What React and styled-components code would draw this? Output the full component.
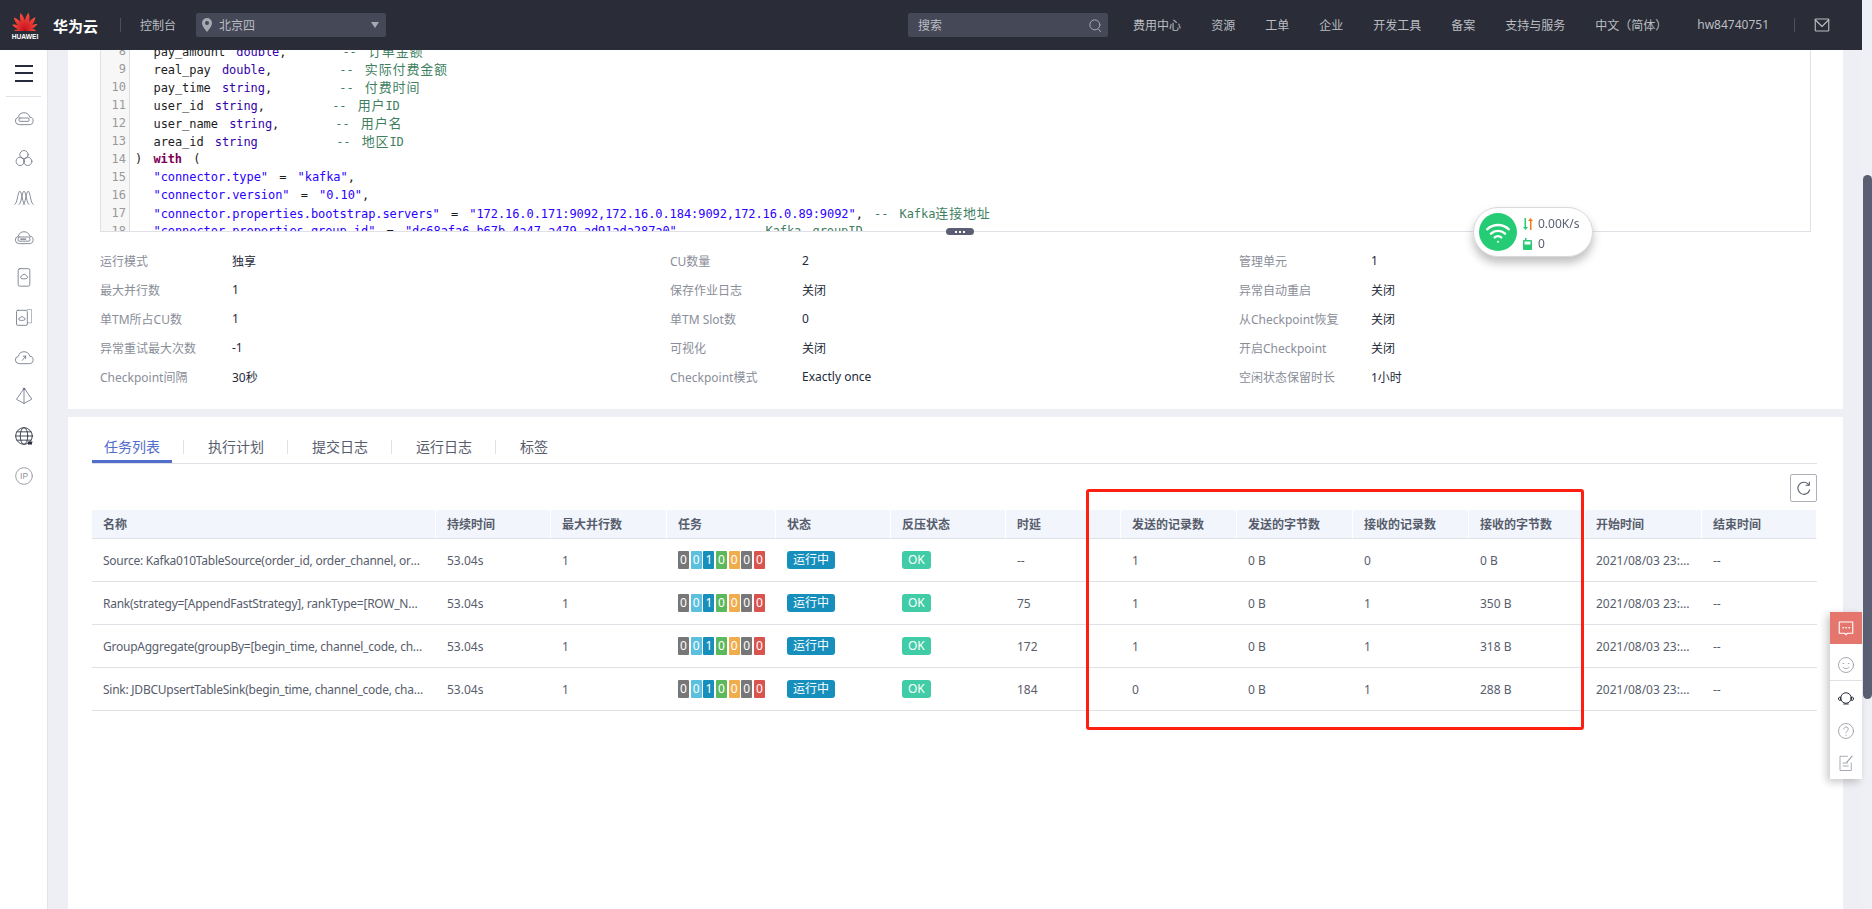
import React from 'react'
import styled, { createGlobalStyle } from 'styled-components'

const UI_FONT = '"Noto Sans", "Noto Sans CJK SC", sans-serif'

const GlobalStyle = createGlobalStyle`
  html, body { margin: 0; padding: 0; height: 100%; overflow: hidden; }
  body { font-family: ${UI_FONT}; font-size: 12px; color: #252b3a; background: #eeeff4; }
`

// Shell
const Shell = styled.div`
  display: flex;
  width: 1872px;
  height: 909px;
  overflow: hidden;
`
const Page = styled.div`
  width: 1862px;
  display: flex;
  flex-direction: column;
`
const Track = styled.div`
  width: 10px;
  padding-left: 1px;
  box-sizing: border-box;
  background: #eff0f5;
`
const Thumb = styled.div`
  margin-top: 175px;
  height: 524px;
  background: #5a5f73;
  border-radius: 5px;
`

// Header
const Header = styled.header`
  height: 50px;
  flex: none;
  background: #2a2d37;
  display: flex;
  align-items: center;
  color: #bbbdc3;
  position: relative;
  z-index: 2;
`
const LogoBox = styled.div`
  width: 26px;
  margin-left: 12px;
  padding-top: 2px;
  display: flex;
  flex-direction: column;
  align-items: center;
`
const LogoWord = styled.span`
  font: bold 7px/8px "Liberation Sans", sans-serif;
  color: #fff;
  margin-top: 2px;
  transform: scaleX(0.95);
`
const Brand = styled.span`
  margin-left: 15px;
  font-size: 15px;
  font-weight: 700;
  color: #fff;
`
const HeadSep = styled.span`
  width: 1px;
  height: 14px;
  background: #4d505c;
  margin: ${p => p.$margin};
`
const ConsoleLink = styled.span`
  font-size: 12px;
`
const Region = styled.div`
  margin-left: 20px;
  width: 190px;
  height: 24px;
  background: #444857;
  border-radius: 2px;
  display: flex;
  align-items: center;
  padding: 0 7px 0 6px;
  box-sizing: border-box;
  gap: 7px;
`
const RegionCaret = styled.span`
  margin-left: auto;
  width: 0;
  height: 0;
  border-left: 4px solid transparent;
  border-right: 4px solid transparent;
  border-top: 6px solid #a7a9b1;
`
const SearchBox = styled.div`
  margin-left: auto;
  width: 200px;
  height: 24px;
  background: #444857;
  border-radius: 2px;
  display: flex;
  align-items: center;
  justify-content: space-between;
  padding: 0 5px 0 10px;
  box-sizing: border-box;
`
const NavList = styled.nav`
  display: flex;
  gap: 30px;
  margin-left: 25px;
  white-space: nowrap;
`
const MailButton = styled.span`
  display: flex;
  margin: 0 31px 0 18px;
`

// Body
const Body = styled.div`
  flex: 1;
  display: flex;
  min-height: 0;
`
const Sidebar = styled.aside`
  width: 47px;
  flex: none;
  background: #fff;
  border-right: 1px solid #e3e4ea;
`
const Burger = styled.div`
  height: 46px;
  margin: 0 6px;
  border-bottom: 1px solid #dfe1e6;
  display: flex;
  flex-direction: column;
  align-items: center;
  justify-content: center;
  gap: 5.5px;
  span {
    width: 18px;
    height: 2px;
    background: #252b3a;
  }
`
const SideList = styled.div`
  padding-top: 1px;
`
const SideItem = styled.div`
  height: 39.8px;
  display: flex;
  align-items: center;
  justify-content: center;
`
const Main = styled.main`
  flex: 1;
  padding: 0 19px 0 20px;
  min-width: 0;
  display: flex;
  flex-direction: column;
  gap: 8px;
`
const Panel = styled.section`
  background: #fff;
  position: relative;
  flex: ${p => (p.$grow ? 1 : 'none')};
`
const TopPanel = styled(Panel)`
  padding: 0 32px 18px;
  height: 359px;
  box-sizing: border-box;
`

// Code editor
const CodeFrame = styled.div`
  position: relative;
  width: 1711px;
  height: 182px;
  box-sizing: border-box;
  border: 1px solid #dfe1e6;
  border-top: 0;
`
const CodeClip = styled.div`
  height: 181px;
  overflow: hidden;
  font: 12px/18px "DejaVu Sans Mono", "Noto Sans CJK SC", monospace;
  letter-spacing: -0.07px;
  word-spacing: -1.55px;
  color: #1c1c1c;
`
const CodeRows = styled.div`
  margin-top: -8px;
`
const CodeRow = styled.div`
  display: flex;
  height: 18px;
  white-space: pre;
`
const LineNo = styled.span`
  width: 29px;
  flex: none;
  box-sizing: border-box;
  background: #f7f7f7;
  border-right: 1px solid #ddd;
  color: #999;
  text-align: right;
  padding-right: 3px;
  letter-spacing: 0;
`
const CodeText = styled.span`
  padding-left: 5px;
`
const Indent = styled.span`
  display: inline-block;
  width: 18.5px;
`
const Kw = styled.span`
  color: #7f0055;
  font-weight: 700;
`
const Bi = styled.span`
  color: #3300aa;
`
const Str = styled.span`
  color: #2a00ff;
`
const Com = styled.span`
  color: #3f7f5f;
`
const Han = styled.span`
  font: 13px/18px "Noto Sans CJK SC", sans-serif;
  letter-spacing: 0.85px;
`
const Resizer = styled.div`
  position: absolute;
  left: 845px;
  bottom: -4px;
  width: 28px;
  height: 7px;
  border-radius: 4px;
  background: #5a5f73;
  display: flex;
  align-items: center;
  justify-content: center;
  gap: 2px;
  span {
    width: 2px;
    height: 2px;
    background: #fff;
  }
`

// Attribute grid
const AttrGrid = styled.div`
  display: grid;
  grid-template-columns: 570px 569px 1fr;
  grid-auto-rows: 29px;
  padding-top: 14px;
`
const Attr = styled.div`
  display: flex;
  align-items: center;
`
const AttrLabel = styled.span`
  width: 132px;
  color: #8a8e99;
`
const AttrValue = styled.span`
  color: #252b3a;
`

// Tabs
const TabsPanel = styled(Panel)`
  padding: 14px 26px 0 24px;
`
const Tabs = styled.div`
  display: flex;
  align-items: flex-start;
  height: 32px;
  border-bottom: 1px solid #dfe1e6;
`
const Tab = styled.div`
  width: ${p => (p.$last ? 'auto' : '80px')};
  padding: ${p => (p.$last ? '0 12px' : '0')};
  height: 32px;
  box-sizing: border-box;
  text-align: center;
  font-size: 14px;
  line-height: 32px;
  color: ${p => (p.$active ? '#526ecc' : '#575d6c')};
  border-bottom: 3px solid ${p => (p.$active ? '#526ecc' : 'transparent')};
`
const TabSep = styled.span`
  width: 1px;
  height: 14px;
  margin: 9px 12px 0 11px;
  background: #dfe1e6;
`
const Toolbar = styled.div`
  display: flex;
  justify-content: flex-end;
  margin: 10px 0 8px;
`
const IconButton = styled.button`
  width: 27px;
  height: 28px;
  padding: 0;
  background: #fff;
  border: 1px solid #adb0b8;
  border-radius: 2px;
  display: flex;
  align-items: center;
  justify-content: center;
`

// Table
const Table = styled.table`
  width: 1725px;
  table-layout: fixed;
  border-collapse: separate;
  border-spacing: 0;
`
const Th = styled.th`
  height: 29px;
  box-sizing: border-box;
  padding: 0 11px;
  background: #f2f5fc;
  border-right: 1px solid #fff;
  border-bottom: 1px solid #dfe1e6;
  font-size: 12px;
  font-weight: 600;
  color: #575d6c;
  text-align: left;
  white-space: nowrap;
`
const Td = styled.td`
  height: 43px;
  box-sizing: border-box;
  padding: 0 11px;
  border-bottom: 1px solid #dfe1e6;
  color: #575d6c;
  white-space: nowrap;
  overflow: hidden;
  text-overflow: ellipsis;
  letter-spacing: ${p => (p.$tight ? '-0.25px' : '0')};
`
const TaskBadges = styled.div`
  display: flex;
  gap: 1.67px;
`
const TaskBadge = styled.span`
  width: 11px;
  height: 18px;
  background: ${p => p.$color};
  color: #fff;
  text-align: center;
  line-height: 18px;
  border-radius: 1px;
`
const StateBadge = styled.span`
  display: inline-block;
  height: 18px;
  line-height: 18px;
  padding: 0 6px;
  border-radius: 3px;
  background: ${p => p.$color};
  color: #fff;
`
const Highlight = styled.div`
  position: absolute;
  left: 1018px;
  top: 72px;
  width: 498px;
  height: 241px;
  box-sizing: border-box;
  border: 3px solid #ff1f10;
  border-radius: 3px;
`

// Floating parts
const NetWidget = styled.div`
  position: fixed;
  left: 1473px;
  top: 207px;
  width: 120px;
  height: 50px;
  box-sizing: border-box;
  background: #fff;
  border: 1px solid #d9d9d9;
  border-radius: 25px;
  box-shadow: 0 6px 10px rgba(0, 0, 0, 0.25);
  display: flex;
  align-items: center;
  padding-left: 5px;
  gap: 6px;
  z-index: 3;
`
const WifiDot = styled.div`
  width: 38px;
  height: 38px;
  border-radius: 50%;
  background: #26cc75;
  display: flex;
  align-items: center;
  justify-content: center;
`
const NetStats = styled.div`
  display: flex;
  flex-direction: column;
  gap: 4px;
  margin-top: 4px;
  color: #5b6078;
  line-height: 16px;
`
const NetStat = styled.div`
  display: flex;
  align-items: center;
  gap: 5px;
`
const FloatBar = styled.div`
  position: fixed;
  left: 1830px;
  top: 612px;
  width: 32px;
  height: 167px;
  background: #fff;
  box-shadow: -3px 3px 8px rgba(0, 0, 0, 0.22);
  display: flex;
  flex-direction: column;
  z-index: 3;
`
const FloatItem = styled.div`
  height: ${p => p.$h}px;
  box-sizing: border-box;
  padding-top: ${p => p.$top || 0}px;
  flex: none;
  background: ${p => p.$bg || 'transparent'};
  border-bottom: ${p => (p.$divided ? '1px solid #dfe1e6' : '0')};
  display: flex;
  align-items: center;
  justify-content: center;
`

// Icons
const Glyph = ({ size = 20, color = '#6f7585', width = 1, children }) => (
  <svg width={size} height={size} viewBox="0 0 24 24" fill="none" stroke={color} strokeWidth={width} strokeLinecap="round" strokeLinejoin="round">
    {children}
  </svg>
)

const CLOUD = 'M6 20a4.500 4.500 0 0 1-.8-8.900A7 7 0 0 1 18.800 11a4.500 4.500 0 0 1-.8 9z'

const SIDE_ICONS = [
  <Glyph key="1"><path d={CLOUD} /><rect x="6" y="12" width="12" height="4" rx="1" /></Glyph>,
  <Glyph key="2"><circle cx="12" cy="8" r="5" /><circle cx="7.5" cy="16" r="5" /><circle cx="16.5" cy="16" r="5" /></Glyph>,
  <Glyph key="3"><path d="M1 21c3 0 3.500-16 6-16s3 16 6 16M6 21c3 0 3.500-16 6-16s3 16 6 16M11 21c3 0 3.500-16 6-16s3 16 6 16" /></Glyph>,
  <Glyph key="4"><path d={CLOUD} /><rect x="5" y="12" width="14" height="5" rx="1" /><path d="M8 14.500h6" strokeWidth="1.500" /></Glyph>,
  <Glyph key="5"><rect x="5" y="2" width="14" height="21" rx="2" /><path d="M9 14a1.800 1.800 0 0 1 .5-3.400 3 3 0 0 1 5.500 0A1.800 1.800 0 0 1 15 14z" /></Glyph>,
  <Glyph key="6"><rect x="3" y="4" width="13" height="18" rx="1.500" /><path d="M16 3h5v16h-5" opacity="0.6" /><path d="M7 16a1.500 1.500 0 0 1 .3-3 2.500 2.500 0 0 1 4.500 0 1.500 1.500 0 0 1 0 3z" /></Glyph>,
  <Glyph key="7"><path d={CLOUD} /><path d="M10 16l4-5M14 11h-3M14 11v3" /></Glyph>,
  <Glyph key="8"><path d="M12 3L3 16l9 5 9-5zM12 3v18" /><circle cx="12" cy="3.500" r="1" fill="#6f7585" /></Glyph>,
  <Glyph key="9" color="#252b3a"><circle cx="12" cy="12" r="10" /><ellipse cx="12" cy="12" rx="4.500" ry="10" /><path d="M2 12h20M3.500 7h17M3.500 17h17" /><path d="M17 19l1 3 1.200-3 1.200 3 1-3" strokeWidth="1.500" /></Glyph>,
  <Glyph key="10" color="#8a8e99"><circle cx="12" cy="12" r="10" /><text x="12" y="16" textAnchor="middle" fontSize="10" fill="#8a8e99" stroke="none" fontFamily="Liberation Sans">IP</text></Glyph>,
]

const PETALS = [[-90, 0.62], [-64, 0.78], [-39, 0.95], [-13, 1], [13, 1], [39, 0.95], [64, 0.78], [90, 0.62]]

const HuaweiLogo = () => (
  <svg width="26" height="19" viewBox="0 0 26 19">
    <defs>
      <linearGradient id="petal" x1="0" y1="0" x2="0" y2="1">
        <stop offset="0" stopColor="#ff5240" />
        <stop offset="1" stopColor="#c40f1d" />
      </linearGradient>
    </defs>
    {PETALS.map(([angle, scale]) => (
      <path
        key={angle}
        d="M0 0C-3.200 -5 -3.200 -13 -.5 -18C2.800 -13 3 -5 0 0Z"
        fill="url(#petal)"
        transform={`translate(13 18.500) rotate(${angle}) scale(${scale})`}
      />
    ))}
  </svg>
)

const PinIcon = () => (
  <svg width="10" height="14" viewBox="0 0 10 14">
    <path d="M5 0a5 5 0 0 1 5 5c0 3.500-5 9-5 9S0 8.500 0 5a5 5 0 0 1 5-5z" fill="#a7a9b1" />
    <circle cx="5" cy="5" r="2" fill="#444857" />
  </svg>
)

// Code content
const C = text => (
  <Com>
    {text.split(/([\u4e00-\u9fff]+)/).map((part, i) => (i % 2 ? <Han key={i}>{part}</Han> : part))}
  </Com>
)
const pad = n => ' '.repeat(n)
const CODE = [
  [8, <><Indent />pay_amount{pad(2)}<Bi>double</Bi>,{pad(10)}{C('--  订单金额')}</>],
  [9, <><Indent />real_pay{pad(2)}<Bi>double</Bi>,{pad(12)}{C('--  实际付费金额')}</>],
  [10, <><Indent />pay_time{pad(2)}<Bi>string</Bi>,{pad(12)}{C('--  付费时间')}</>],
  [11, <><Indent />user_id{pad(2)}<Bi>string</Bi>,{pad(12)}{C('--  用户ID')}</>],
  [12, <><Indent />user_name{pad(2)}<Bi>string</Bi>,{pad(10)}{C('--  用户名')}</>],
  [13, <><Indent />area_id{pad(2)}<Bi>string</Bi>{pad(14)}{C('--  地区ID')}</>],
  [14, <>){pad(2)}<Kw>with</Kw>{pad(2)}(</>],
  [15, <><Indent /><Str>"connector.type"</Str>{pad(2)}={pad(2)}<Str>"kafka"</Str>,</>],
  [16, <><Indent /><Str>"connector.version"</Str>{pad(2)}={pad(2)}<Str>"0.10"</Str>,</>],
  [17, <><Indent /><Str>"connector.properties.bootstrap.servers"</Str>{pad(2)}={pad(2)}<Str>"172.16.0.171:9092,172.16.0.184:9092,172.16.0.89:9092"</Str>,{pad(2)}{C('--  Kafka连接地址')}</>],
  [18, <><Indent /><Str>"connector.properties.group.id"</Str>{pad(2)}={pad(2)}<Str>"dc68afa6-b67b-4a47-a479-ad91ada287a0"</Str>,{pad(10)}{C('--  Kafka  groupID')}</>],
]

const ATTRS = [
  ['运行模式', '独享'], ['CU数量', '2'], ['管理单元', '1'],
  ['最大并行数', '1'], ['保存作业日志', '关闭'], ['异常自动重启', '关闭'],
  ['单TM所占CU数', '1'], ['单TM Slot数', '0'], ['从Checkpoint恢复', '关闭'],
  ['异常重试最大次数', '-1'], ['可视化', '关闭'], ['开启Checkpoint', '关闭'],
  ['Checkpoint间隔', '30秒'], ['Checkpoint模式', 'Exactly once'], ['空闲状态保留时长', '1小时'],
]

const TABS = ['任务列表', '执行计划', '提交日志', '运行日志', '标签']

const COLUMNS = [
  ['名称', 344], ['持续时间', 115], ['最大并行数', 116], ['任务', 109], ['状态', 115], ['反压状态', 115], ['时延', 115],
  ['发送的记录数', 116], ['发送的字节数', 116], ['接收的记录数', 116], ['接收的字节数', 116], ['开始时间', 117], ['结束时间', 115],
]

const ROWS = [
  ['Source: Kafka010TableSource(order_id, order_channel, order_time, pay_amount)', '--', '1', '0 B', '0', '0 B'],
  ['Rank(strategy=[AppendFastStrategy], rankType=[ROW_NUMBER], rankRange=[rankStart=1])', '75', '1', '0 B', '1', '350 B'],
  ['GroupAggregate(groupBy=[begin_time, channel_code, channel_name], select=[begin_time])', '172', '1', '0 B', '1', '318 B'],
  ['Sink: JDBCUpsertTableSink(begin_time, channel_code, channel_name, cur_gmv)', '184', '0', '0 B', '1', '288 B'],
]

const TASK_COLORS = [
  ['0', '#777'], ['0', '#5bc0de'], ['1', '#168fbc'], ['0', '#5cb85c'], ['0', '#f0ad4e'], ['0', '#777'], ['0', '#d9534f'],
]

const App = () => (
  <>
    <GlobalStyle />
    <Shell>
      <Page>
        <Header>
          <LogoBox>
            <HuaweiLogo />
            <LogoWord>HUAWEI</LogoWord>
          </LogoBox>
          <Brand>华为云</Brand>
          <HeadSep $margin="0 19px 0 22px" />
          <ConsoleLink>控制台</ConsoleLink>
          <Region>
            <PinIcon />
            <span>北京四</span>
            <RegionCaret />
          </Region>
          <SearchBox>
            搜索
            <Glyph size={15} color="#a7a9b1" width={1.6}>
              <circle cx="11" cy="11" r="8" />
              <path d="M17 18l3 4" />
            </Glyph>
          </SearchBox>
          <NavList>
            {['费用中心', '资源', '工单', '企业', '开发工具', '备案', '支持与服务', '中文（简体）', 'hw84740751'].map(item => (
              <span key={item}>{item}</span>
            ))}
          </NavList>
          <HeadSep $margin="0 0 0 25px" />
          <MailButton>
            <Glyph size={18} color="#bbbdc3" width={1.5}>
              <rect x="3" y="4" width="18" height="16" rx="1" />
              <path d="M3 5l9 9 9-9" />
            </Glyph>
          </MailButton>
        </Header>
        <Body>
          <Sidebar>
            <Burger>
              <span />
              <span />
              <span />
            </Burger>
            <SideList>
              {SIDE_ICONS.map(icon => (
                <SideItem key={icon.key}>{icon}</SideItem>
              ))}
            </SideList>
          </Sidebar>
          <Main>
            <TopPanel>
              <CodeFrame>
                <CodeClip>
                  <CodeRows>
                    {CODE.map(([no, text]) => (
                      <CodeRow key={no}>
                        <LineNo>{no}</LineNo>
                        <CodeText>{text}</CodeText>
                      </CodeRow>
                    ))}
                  </CodeRows>
                </CodeClip>
                <Resizer>
                  <span />
                  <span />
                  <span />
                </Resizer>
              </CodeFrame>
              <AttrGrid>
                {ATTRS.map(([label, value]) => (
                  <Attr key={label}>
                    <AttrLabel>{label}</AttrLabel>
                    <AttrValue>{value}</AttrValue>
                  </Attr>
                ))}
              </AttrGrid>
            </TopPanel>
            <TabsPanel $grow>
              <Tabs>
                {TABS.map((tab, i) => (
                  <React.Fragment key={tab}>
                    {i > 0 && <TabSep />}
                    <Tab $active={i === 0} $last={i === TABS.length - 1}>{tab}</Tab>
                  </React.Fragment>
                ))}
              </Tabs>
              <Toolbar>
                <IconButton aria-label="refresh">
                  <Glyph size={16} color="#575d6c" width={1.6}>
                    <path d="M19 7a9 9 0 1 0 1.500 8" />
                    <path d="M20 3v5h-5" />
                  </Glyph>
                </IconButton>
              </Toolbar>
              <Table>
                <colgroup>
                  {COLUMNS.map(([name, width]) => (
                    <col key={name} width={width} />
                  ))}
                </colgroup>
                <thead>
                  <tr>
                    {COLUMNS.map(([name]) => (
                      <Th key={name}>{name}</Th>
                    ))}
                  </tr>
                </thead>
                <tbody>
                  {ROWS.map(([name, delay, sentRec, sentBytes, recvRec, recvBytes]) => (
                    <tr key={name}>
                      <Td $tight>{name}</Td>
                      <Td>53.04s</Td>
                      <Td>1</Td>
                      <Td>
                        <TaskBadges>
                          {TASK_COLORS.map(([count, color], i) => (
                            <TaskBadge key={i} $color={color}>{count}</TaskBadge>
                          ))}
                        </TaskBadges>
                      </Td>
                      <Td><StateBadge $color="#168fbc">运行中</StateBadge></Td>
                      <Td><StateBadge $color="#40cca6">OK</StateBadge></Td>
                      <Td>{delay}</Td>
                      <Td>{sentRec}</Td>
                      <Td>{sentBytes}</Td>
                      <Td>{recvRec}</Td>
                      <Td>{recvBytes}</Td>
                      <Td>2021/08/03 23:41:28</Td>
                      <Td>--</Td>
                    </tr>
                  ))}
                </tbody>
              </Table>
              <Highlight />
            </TabsPanel>
          </Main>
        </Body>
      </Page>
      <Track>
        <Thumb />
      </Track>
      <NetWidget>
        <WifiDot>
          <svg width="26" height="26" viewBox="0 0 24 24" fill="none" stroke="#fff" strokeWidth="2.200" strokeLinecap="round">
            <path d="M2 9.500a14.500 14.500 0 0 1 20 0M5.500 13.500a9.500 9.500 0 0 1 13 0M9 17a4.500 4.500 0 0 1 6 0" />
            <circle cx="12" cy="21" r="1" fill="#fff" stroke="none" />
          </svg>
        </WifiDot>
        <NetStats>
          <NetStat>
            <svg width="10" height="12" viewBox="0 0 10 12">
              <path d="M3 0v9h2L2.500 12 0 9h1.500V0z" fill="#26cc75" />
              <path d="M7 12V3H5l2.500-3L10 3H8.500v9z" fill="#f47a16" />
            </svg>
            <span>0.00K/s</span>
          </NetStat>
          <NetStat>
            <svg width="10" height="12" viewBox="0 0 10 12">
              <path d="M1 2h1V0h1.500v2H8a1 1 0 0 1 1 1v8a1 1 0 0 1-1 1H1a1 1 0 0 1-1-1V3a1 1 0 0 1 1-1z" fill="#26cc75" />
              <rect x="1.500" y="3.500" width="6" height="3" fill="#fff" />
            </svg>
            <span>0</span>
          </NetStat>
        </NetStats>
      </NetWidget>
      <FloatBar>
        <FloatItem $h={32} $bg="#e5766e">
          <Glyph size={18} color="#fff" width={1.5}>
            <path d="M3 4h18v15h-7l-2 2-2-2H3z" />
            <path d="M8 11.500h.5M12 11.500h.5M16 11.500h.5" strokeWidth="2" />
          </Glyph>
        </FloatItem>
        <FloatItem $h={37} $top={6} $divided>
          <Glyph size={18} color="#8a8e99">
            <circle cx="12" cy="12" r="10" />
            <path d="M8 10h1M15 10h1M8 15c2 2.500 6 2.500 8 0" />
          </Glyph>
        </FloatItem>
        <FloatItem $h={33}>
          <Glyph size={18} color="#252b3a" width={1.3}>
            <circle cx="12" cy="12" r="7" />
            <path d="M2 13a2 2 0 0 1 3-2v4a2 2 0 0 1-3-2zM22 13a2 2 0 0 0-3-2v4a2 2 0 0 0 3-2zM9 20h6" />
          </Glyph>
        </FloatItem>
        <FloatItem $h={33}>
          <Glyph size={18} color="#8a8e99">
            <circle cx="12" cy="12" r="10" />
            <path d="M9 9.500a3 3 0 1 1 4.500 2.600c-1 .6-1.500 1.200-1.500 2.400M12 17.500v.5" />
          </Glyph>
        </FloatItem>
        <FloatItem $h={32}>
          <Glyph size={18} color="#8a8e99">
            <path d="M19 12v10H4V3h10M8 12h6M8 16h7" />
            <path d="M13 11l7-8" strokeWidth="1.500" />
          </Glyph>
        </FloatItem>
      </FloatBar>
    </Shell>
  </>
)

export default App
